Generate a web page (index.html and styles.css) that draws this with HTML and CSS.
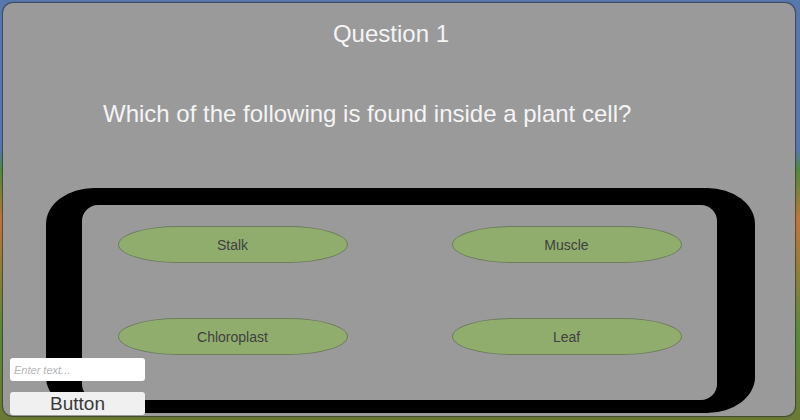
FILE: index.html
```html
<!DOCTYPE html>
<html lang="en">
<head>
  <meta charset="UTF-8">
  <meta name="viewport" content="width=device-width, initial-scale=1.0">
  <title>Quiz</title>
  <link rel="stylesheet" href="styles.css">
</head>
<body>

  <div class="panel">
    <h1 class="title">Question 1</h1>
    <p class="question">Which of the following is found inside a plant cell?</p>

    <div class="frame">
      <div class="answers">
        <button class="answer">Stalk</button>
        <button class="answer">Muscle</button>
        <button class="answer">Chloroplast</button>
        <button class="answer">Leaf</button>
      </div>
    </div>
  </div>

  <div class="debug">
    <input type="text" class="debug-input" placeholder="Enter text...">
    <button class="debug-button">Button</button>
  </div>

</body>
</html>
```

FILE: styles.css
```css
body {
  margin: 0;
  width: 800px;
  height: 420px;
  overflow: hidden;
  position: relative;
  font-family: 'Liberation Sans', Arial, sans-serif;
  background: linear-gradient(to bottom, #5877ad 0, #5877ad 150px, #4f8a3c 170px, #c0753a 220px, #5b8a3a 330px, #6b7a34 420px);
}

.panel {
  margin: 3px 5px 0 3px;
  height: 413px;
  box-sizing: border-box;
  background-color: #9a9a9a;
  border-radius: 10px;
  box-shadow: 0 0 1px 1px rgba(40, 40, 40, 0.6);
  overflow: hidden;
}

.title {
  margin: 0;
  padding: 17px 16px 0 0;
  font-size: 24px;
  font-weight: normal;
  line-height: 28px;
  color: #f4f4f4;
  text-align: center;
}

.question {
  margin: 0;
  padding: 52px 0 0 100px;
  font-size: 24px;
  line-height: 28px;
  color: #f4f4f4;
}

.frame {
  margin: 60px 0 0 43px;
  width: 709px;
  box-sizing: border-box;
  padding: 17px 38px 13px 36px;
  background-color: #000;
  border-radius: 48px / 36px;
}

.answers {
  display: grid;
  grid-template-columns: 230px 230px;
  column-gap: 104px;
  row-gap: 55px;
  justify-content: center;
  padding: 21px 0 45px;
  background-color: #9a9a9a;
  border-radius: 16px;
}

.answer {
  height: 37px;
  padding: 0;
  font-family: 'Liberation Sans', Arial, sans-serif;
  font-size: 14px;
  color: #404040;
  background-color: #90ad6e;
  border: 1px solid #6e7c5e;
  border-radius: 60px / 50%;
}

.debug {
  position: absolute;
  left: 10px;
  top: 358px;
  width: 135px;
  display: flex;
  flex-direction: column;
  gap: 11px;
}

.debug-input {
  height: 23px;
  box-sizing: border-box;
  padding: 0 4px;
  border: none;
  border-radius: 3px;
  background: #fff;
  font-family: 'Liberation Sans', Arial, sans-serif;
  font-size: 11px;
}

.debug-input::placeholder {
  color: #b4b4b4;
  font-style: italic;
}

.debug-button {
  height: 23px;
  padding: 0;
  border: none;
  border-radius: 3px;
  background: #f0f0f0;
  font-family: 'Liberation Sans', Arial, sans-serif;
  font-size: 19px;
  line-height: 23px;
  color: #3a3a3a;
}
```
